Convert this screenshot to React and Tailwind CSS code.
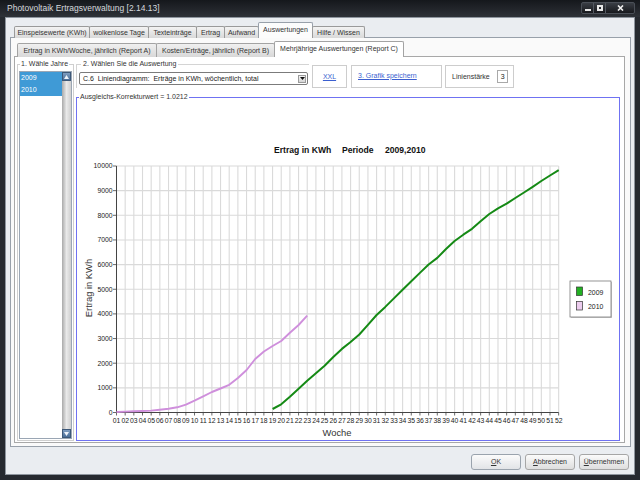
import React from "react";

const mainTabs = [
  { label: "Einspeisewerte (KWh)", cls: "w-[76px]" },
  { label: "wolkenlose Tage", cls: "w-[60px]" },
  { label: "Texteinträge", cls: "w-[49px]" },
  { label: "Ertrag", cls: "w-[29px]" },
  { label: "Aufwand", cls: "w-[35px]" },
  { label: "Auswertungen", cls: "w-[55px]", active: true },
  { label: "Hilfe / Wissen", cls: "w-[53px]" },
];

const subTabs = [
  { label: "Ertrag in KWh/Woche, jährlich (Report A)", cls: "w-[140px]" },
  { label: "Kosten/Erträge, jährlich (Report B)", cls: "w-[119px]" },
  { label: "Mehrjährige Auswertungen (Report C)", cls: "w-[130px]", active: true },
];

// kumulierte Werte pro Woche (KWh)
const data2009 = {
  start: 19,
  values: [
    142, 333, 637, 961, 1286, 1590, 1894, 2252, 2580, 2860, 3164, 3554, 3955,
    4284, 4629, 4982, 5327, 5665, 6004, 6272, 6633, 6957, 7213, 7452, 7759,
    8053, 8280, 8471, 8702, 8925, 9156, 9391, 9615, 9834,
  ],
};
const data2010 = {
  start: 1,
  values: [
    20, 37, 49, 61, 77, 114, 150, 211, 320, 483, 657, 832, 974, 1124, 1400,
    1724, 2170, 2475, 2698, 2900, 3237, 3550, 3927,
  ],
};

const weeks = Array.from({ length: 52 }, (_, i) => i + 1);
const steps = Array.from({ length: 11 }, (_, i) => i * 1000);

const X = (w) => 116.5 + (w - 1) * 8.67;
const Y = (v) => 412.5 - v * 0.02465;
const toPoints = (d) =>
  d.values.map((v, i) => `${X(d.start + i).toFixed(1)},${Y(v).toFixed(1)}`).join(" ");

function Chart() {
  return (
    <svg
      width="542"
      height="339"
      viewBox="77 101 542 339"
      className="block"
      fontFamily="'Liberation Sans', Arial, sans-serif"
    >
      <text x="274" y="153" fontSize="8.6" fontWeight="bold" fill="#111">
        Ertrag in KWh
      </text>
      <text x="342" y="153" fontSize="8.6" fontWeight="bold" fill="#111">
        Periode
      </text>
      <text x="385" y="153" fontSize="8.6" fontWeight="bold" fill="#111">
        2009,2010
      </text>

      {weeks.map((w) => (
        <line key={w} x1={X(w)} x2={X(w)} y1="166" y2="412.5" stroke="#dadada" strokeWidth="1.1" />
      ))}
      {steps.map((v) => (
        <line key={v} x1="116.5" x2={X(52)} y1={Y(v)} y2={Y(v)} stroke="#dadada" strokeWidth="1.1" />
      ))}

      <line x1="116.5" x2="116.5" y1="166" y2="413" stroke="#444" strokeWidth="1" />
      <line x1="116" x2={X(52)} y1="412.5" y2="412.5" stroke="#444" strokeWidth="1" />
      {steps.map((v) => (
        <line key={v} x1="113" x2="116.5" y1={Y(v)} y2={Y(v)} stroke="#444" strokeWidth="0.8" />
      ))}
      {weeks.map((w) => (
        <line key={w} x1={X(w)} x2={X(w)} y1="412.5" y2="415.5" stroke="#444" strokeWidth="0.8" />
      ))}

      {steps.map((v) => (
        <text key={v} x="112.5" y={Y(v) + 2.4} fontSize="6.8" textAnchor="end" fill="#222">
          {v}
        </text>
      ))}
      {weeks.map((w) => (
        <text key={w} x={X(w)} y="422.5" fontSize="6.8" textAnchor="middle" fill="#222">
          {String(w).padStart(2, "0")}
        </text>
      ))}

      <text
        x="91.5"
        y="288"
        fontSize="9.4"
        textAnchor="middle"
        fill="#333"
        transform="rotate(-90 91.5 288)"
      >
        Ertrag in KWh
      </text>
      <text x="322.5" y="435.5" fontSize="9.4" fill="#333">
        Woche
      </text>

      <polyline points={toPoints(data2010)} fill="none" stroke="#cf8fdc" strokeWidth="1.9" strokeLinejoin="round" />
      <polyline points={toPoints(data2009)} fill="none" stroke="#158a15" strokeWidth="2" strokeLinejoin="round" />

      <rect x="571" y="282" width="41" height="36" fill="#c9c9c9" />
      <rect x="570" y="281" width="41" height="36" fill="#fff" stroke="#7a7a7a" strokeWidth="0.8" />
      <rect x="576.5" y="287" width="6" height="8.5" fill="#22b022" stroke="#333" strokeWidth="0.7" />
      <text x="588" y="294.5" fontSize="6.9" fill="#222">
        2009
      </text>
      <rect x="576.5" y="301.5" width="6" height="8.5" fill="#ecccee" stroke="#333" strokeWidth="0.7" />
      <text x="588" y="308.5" fontSize="6.9" fill="#222">
        2010
      </text>
    </svg>
  );
}

function ScrollArrow({ up }) {
  return (
    <div className="h-[9px] flex items-center justify-center bg-gradient-to-b from-[#7f9dc0] to-[#4a6e98] border border-[#3d5878]">
      <svg width="5" height="4" viewBox="0 0 5 4">
        <polygon points={up ? "0,4 2.5,0 5,4" : "0,0 2.5,4 5,0"} fill="#eef3fa" />
      </svg>
    </div>
  );
}

export default function App() {
  return (
    <div className="w-[640px] h-[480px] bg-[#262a30] flex flex-col font-['Liberation_Sans',Arial,sans-serif] text-[7px] leading-[8px] text-[#333] overflow-hidden">
      {/* Titelleiste */}
      <div className="h-[17px] flex items-start justify-between bg-gradient-to-b from-[#15181c] to-[#2e3238]">
        <span className="pl-[7px] pt-[3px] text-[8.5px] leading-[10px] text-[#d6d9de]">
          Photovoltaik Ertragsverwaltung [2.14.13]
        </span>
        <div className="flex mt-[2px] mr-[5px] border border-[#4a4f57] rounded-[2px] bg-gradient-to-b from-[#3a3e45] to-[#17191d]">
          <div className="w-[12px] h-[10px] flex items-end justify-center pb-[2px] border-r border-[#555a62]">
            <div className="w-[6px] h-[2px] bg-[#e8e8e8]" />
          </div>
          <div className="w-[12px] h-[10px] flex items-center justify-center border-r border-[#555a62]">
            <div className="w-[6px] h-[6px] border-2 border-[#e8e8e8]" />
          </div>
          <div className="w-[28px] h-[10px] flex items-center justify-center">
            <svg width="7" height="6" viewBox="0 0 7 6">
              <path d="M1 0.5 L6 5.5 M6 0.5 L1 5.5" stroke="#f0f0f0" strokeWidth="1.6" />
            </svg>
          </div>
        </div>
      </div>

      {/* Fensterinhalt */}
      <div className="flex-1 mx-[5px] mb-[5px] bg-[#eaedf1] border border-[#8e959e] flex flex-col">
        <div className="h-[20px] -mb-px flex items-end pl-[8px] relative z-10">
          {mainTabs.map((t, i) =>
            t.active ? (
              <div
                key={t.label}
                className={`${t.cls} h-[16px] -ml-px flex items-center justify-center whitespace-nowrap bg-[#fcfcfc] border border-b-0 border-[#98a0aa] rounded-t-[2px] pb-[1px]`}
              >
                {t.label}
              </div>
            ) : (
              <div
                key={t.label}
                className={`${t.cls} h-[12px] ${i === 0 ? "" : "-ml-px"} flex items-center justify-center whitespace-nowrap bg-gradient-to-b from-[#f3f3f3] to-[#d9d9d9] border border-b-0 border-[#9a9a9a] rounded-t-[2px]`}
              >
                {t.label}
              </div>
            )
          )}
        </div>

        <div className="h-[410px] ml-[4px] mr-[3px] bg-[#fafafa] border border-[#98a0aa] flex flex-col">
          <div className="h-[19px] -mb-px flex items-end pl-[6px] relative z-10">
            {subTabs.map((t, i) =>
              t.active ? (
                <div
                  key={t.label}
                  className={`${t.cls} h-[16px] -ml-px flex items-center justify-center whitespace-nowrap bg-white border border-b-0 border-[#a3a3a3] rounded-t-[2px] pb-[1px]`}
                >
                  {t.label}
                </div>
              ) : (
                <div
                  key={t.label}
                  className={`${t.cls} h-[14px] ${i === 0 ? "" : "-ml-px"} flex items-center justify-center whitespace-nowrap bg-gradient-to-b from-[#f0f0f0] to-[#d8d8d8] border border-b-0 border-[#a3a3a3] rounded-t-[2px]`}
                >
                  {t.label}
                </div>
              )
            )}
          </div>

          <div className="h-[387px] ml-[3px] mr-[5px] bg-white border border-[#a8a8a8] flex pt-[3px]">
            {/* 1. Wähle Jahre */}
            <fieldset className="ml-[2px] w-[57px] h-[381px] border border-[#cfcfcf] px-[1px]">
              <legend className="ml-[1px] px-[1px] leading-[8px]">1. Wähle Jahre</legend>
              <div className="mt-[3px] h-[368px] border border-[#9aa6b4] flex">
                <div className="flex-1 flex flex-col">
                  <div className="h-[12px] pl-[1px] flex items-center bg-[#3f9ad6] text-white">2009</div>
                  <div className="h-[12px] pl-[1px] flex items-center bg-[#3f9ad6] text-white">2010</div>
                </div>
                <div className="w-[9px] flex flex-col bg-gradient-to-r from-[#a9a9a9] via-[#e9e9e9] to-[#cfcfcf]">
                  <ScrollArrow up />
                  <div className="flex-1" />
                  <ScrollArrow />
                </div>
              </div>
            </fieldset>

            <div className="ml-[2px] w-[544px] flex flex-col">
              <div className="flex items-start">
                <fieldset className="w-[233px] h-[28px] border border-[#d4d4d4] border-b-0 border-r-0">
                  <legend className="ml-[4px] px-[2px] leading-[8px]">2. Wählen Sie die Auswertung</legend>
                  <div className="mt-[4px] ml-[2px] w-[229px] h-[13px] flex items-center justify-between bg-white border border-[#7b7b7b] rounded-[2px] pl-[3px] pr-[1px] text-[#222]">
                    <span className="whitespace-pre">C.6  Liniendiagramm:  Erträge in KWh, wöchentlich, total</span>
                    <div className="w-[8px] h-[8px] flex items-center justify-center bg-gradient-to-b from-[#f4f4f4] to-[#d6d6d6] border border-[#9a9a9a]">
                      <svg width="5" height="3" viewBox="0 0 5 3">
                        <polygon points="0,0 5,0 2.5,3" fill="#111" />
                      </svg>
                    </div>
                  </div>
                </fieldset>
                <div className="ml-[3px] mt-[5px] w-[35px] h-[23px] border border-[#cdcdcd] flex items-center justify-center">
                  <span className="text-[#3b5fd0] underline">XXL</span>
                </div>
                <div className="ml-[4px] mt-[5px] w-[91px] h-[23px] border border-[#cdcdcd] flex items-center pl-[6px] pb-[2px]">
                  <span className="text-[#3b5fd0] underline">3. Grafik speichern</span>
                </div>
                <div className="ml-[3px] mt-[5px] w-[69px] h-[23px] border border-[#cdcdcd] flex items-center pl-[6px]">
                  <span className="pt-[1px]">Linienstärke</span>
                  <div className="ml-[7px] w-[11px] h-[13px] border border-[#a9a9a9] bg-white flex items-center justify-end pr-[2px] text-[#222]">
                    3
                  </div>
                </div>
              </div>

              <fieldset className="mt-[5px] w-[544px] h-[348px] border border-[#6f72f2]">
                <legend className="ml-[2px] px-[1px] leading-[8px]">Ausgleichs-Korrekturwert = 1.0212</legend>
                <Chart />
              </fieldset>
            </div>
          </div>
        </div>

        <div className="flex justify-end pt-[7px] pr-[5px] gap-[4px]">
          <button className="w-[50px] h-[16px] rounded-[3px] border border-[#9aa3ad] bg-gradient-to-b from-[#fbfbfb] to-[#e2e4e7] text-[7px] text-[#333]">
            <span className="underline">O</span>K
          </button>
          <button className="w-[50px] h-[16px] rounded-[3px] border border-[#a6a6a6] bg-gradient-to-b from-[#fbfbfb] to-[#dedede] text-[7px] text-[#333]">
            <span className="underline">A</span>bbrechen
          </button>
          <button className="w-[50px] h-[16px] rounded-[3px] border border-[#a6a6a6] bg-gradient-to-b from-[#fbfbfb] to-[#dedede] text-[7px] text-[#333]">
            <span className="underline">Ü</span>bernehmen
          </button>
        </div>
      </div>
    </div>
  );
}
